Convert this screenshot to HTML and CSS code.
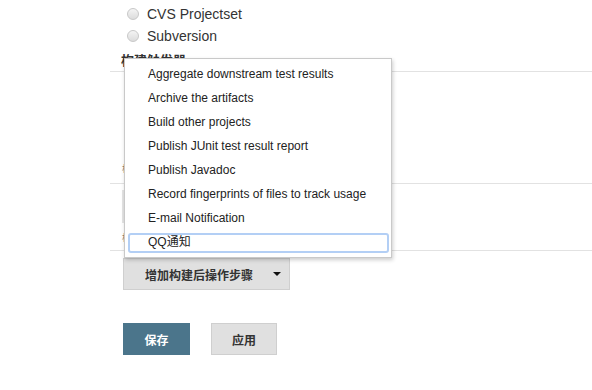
FILE: index.html
```html
<!DOCTYPE html>
<html lang="zh">
<head>
    <meta charset="UTF-8">
    <title>Jenkins 配置</title>
    <link rel="stylesheet" href="styles.css">
</head>
<body>
    <div class="config">
        <div class="scm-list">
            <label class="scm-option"><span class="radio"></span>CVS Projectset</label>
            <label class="scm-option"><span class="radio"></span>Subversion</label>
        </div>

        <div class="section section-triggers">
            <div class="section-title">构建触发器</div>
        </div>
        <div class="section section-env">
            <div class="section-label">构建环境</div>
        </div>
        <div class="section section-build">
            <div class="build-step"></div>
            <div class="section-label">构建</div>
        </div>

        <div class="post-build">
            <button class="btn btn-dropdown">增加构建后操作步骤<span class="caret"></span></button>
        </div>

        <div class="form-actions">
            <button class="btn btn-primary">保存</button>
            <button class="btn btn-default">应用</button>
        </div>
    </div>

    <!-- Post-build action menu -->
    <ul class="menu">
        <li>Aggregate downstream test results</li>
        <li>Archive the artifacts</li>
        <li>Build other projects</li>
        <li>Publish JUnit test result report</li>
        <li>Publish Javadoc</li>
        <li>Record fingerprints of files to track usage</li>
        <li>E-mail Notification</li>
        <li class="focused">QQ通知</li>
    </ul>
</body>
</html>
```

FILE: styles.css
```css
body {
    font-family: 'Liberation Sans', 'Noto Sans CJK SC', sans-serif;
    color: #333;
    margin: 0;
    padding: 0;
    background: white;
}
.config {
    padding-left: 110px;
}
.scm-list {
    padding-top: 3px;
    padding-left: 17px;
}
.scm-option {
    display: flex;
    align-items: center;
    height: 22px;
    font-size: 14px;
    color: #333;
}
.radio {
    width: 10px;
    height: 10px;
    border-radius: 50%;
    border: 1px solid #c8c8c8;
    background: linear-gradient(#f4f4f4, #dcdcdc);
    margin-right: 8px;
}
.section {
    border-bottom: 1px solid #e2e2e2;
}
.section-triggers {
    height: 24px;
}
.section-title {
    padding-left: 11px;
    padding-top: 3px;
    font-size: 13px;
    font-weight: bold;
    color: #333;
}
.section-env {
    height: 111px;
}
.section-build {
    height: 67px;
    box-sizing: border-box;
    padding-top: 6px;
}
.section-label {
    padding-top: 92px;
    padding-left: 12px;
    font-size: 9px;
    line-height: 10px;
    color: #8a7a70;
}
.build-step {
    margin-left: 12px;
    height: 33px;
    border-left: 2px solid #e4e4e4;
}
.section-build .section-label {
    padding-top: 10px;
}
.post-build {
    padding-top: 7px;
    padding-left: 13px;
}
.btn {
    font-family: 'Liberation Sans', 'Noto Sans CJK SC', sans-serif;
    font-size: 12px;
    font-weight: bold;
    border-radius: 0;
    cursor: pointer;
    padding: 0;
    height: 32px;
}
.btn-dropdown {
    width: 167px;
    background: #e0e0e0;
    border: 1px solid #cfcfcf;
    color: #333;
    display: flex;
    align-items: center;
    padding-left: 21px;
}
.caret {
    margin-left: 20px;
    width: 0;
    height: 0;
    border-left: 4px solid transparent;
    border-right: 4px solid transparent;
    border-top: 4px solid #111;
}
.form-actions {
    padding-top: 33px;
    padding-left: 13px;
    display: flex;
    gap: 21px;
}
.btn-primary {
    width: 67px;
    background: #4b758b;
    border: 1px solid #4b758b;
    color: white;
}
.btn-default {
    width: 66px;
    background: #e0e0e0;
    border: 1px solid #cfcfcf;
    color: #333;
}
.menu {
    position: absolute;
    left: 124px;
    top: 58px;
    width: 266px;
    margin: 0;
    padding: 3px 0;
    list-style-type: none;
    background: white;
    border: 1px solid #c9c9c9;
    box-shadow: 1px 2px 4px rgba(0, 0, 0, 0.2);
}
.menu li {
    position: relative;
    height: 24px;
    line-height: 24px;
    padding-left: 23px;
    font-size: 12px;
    color: #222;
}
.menu li.focused::after {
    content: "";
    position: absolute;
    left: 3px;
    right: 2px;
    top: 3px;
    bottom: 1px;
    border: 2px solid #b3cff5;
    border-radius: 3px;
}
```
